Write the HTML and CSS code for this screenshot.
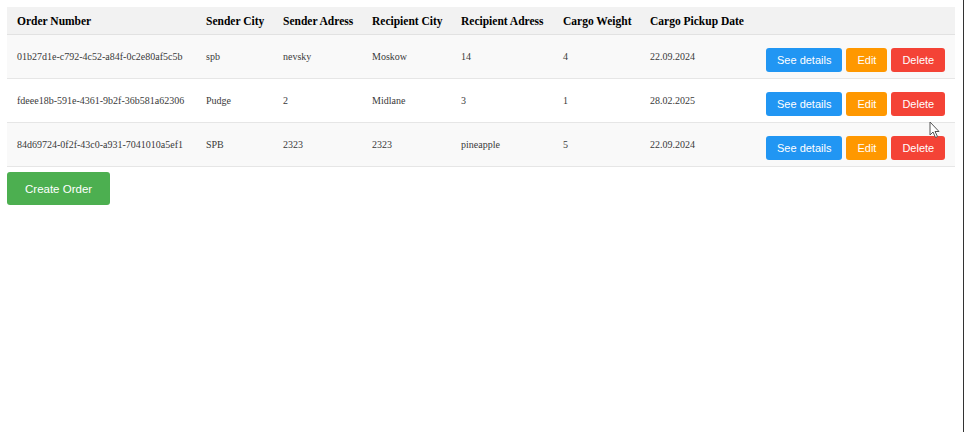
FILE: index.html
```html
<!DOCTYPE html>
<html lang="en">
<head>
<meta charset="utf-8">
<title>Orders</title>
<link rel="stylesheet" href="styles.css">
</head>
<body>
<div class="page">
  <table class="orders">
    <colgroup>
      <col class="c-id"><col class="c-scity"><col class="c-saddr"><col class="c-rcity"><col class="c-raddr"><col class="c-weight"><col class="c-date"><col class="c-actions">
    </colgroup>
    <thead>
      <tr>
        <th>Order Number</th>
        <th>Sender City</th>
        <th>Sender Adress</th>
        <th>Recipient City</th>
        <th>Recipient Adress</th>
        <th>Cargo Weight</th>
        <th>Cargo Pickup Date</th>
        <th></th>
      </tr>
    </thead>
    <tbody>
      <tr>
        <td>01b27d1e-c792-4c52-a84f-0c2e80af5c5b</td>
        <td>spb</td>
        <td>nevsky</td>
        <td>Moskow</td>
        <td>14</td>
        <td>4</td>
        <td>22.09.2024</td>
        <td class="actions"><button class="btn btn-blue">See details</button><button class="btn btn-orange">Edit</button><button class="btn btn-red">Delete</button></td>
      </tr>
      <tr>
        <td>fdeee18b-591e-4361-9b2f-36b581a62306</td>
        <td>Pudge</td>
        <td>2</td>
        <td>Midlane</td>
        <td>3</td>
        <td>1</td>
        <td>28.02.2025</td>
        <td class="actions"><button class="btn btn-blue">See details</button><button class="btn btn-orange">Edit</button><button class="btn btn-red">Delete</button></td>
      </tr>
      <tr>
        <td>84d69724-0f2f-43c0-a931-7041010a5ef1</td>
        <td>SPB</td>
        <td>2323</td>
        <td>2323</td>
        <td>pineapple</td>
        <td>5</td>
        <td>22.09.2024</td>
        <td class="actions"><button class="btn btn-blue">See details</button><button class="btn btn-orange">Edit</button><button class="btn btn-red">Delete</button></td>
      </tr>
    </tbody>
  </table>
  <button class="btn btn-green create">Create Order</button>
  <svg class="cursor" width="12" height="18" viewBox="0 0 12 18"><path d="M1 1 L1 14 L4 11 L6.5 16.5 L8.5 15.5 L6 10.5 L10 10.5 Z" fill="#fff" stroke="#555" stroke-width="1"/></svg>
</div>
</body>
</html>
```

FILE: styles.css
```css
html, body {
  margin: 0;
  padding: 0;
  background: #fff;
}
.page {
  position: relative;
  box-sizing: border-box;
  width: 964px;
  height: 432px;
  padding: 7px;
  border-right: 1px solid #333;
  font-family: "Liberation Serif", "Times New Roman", serif;
}
.orders {
  width: 948px;
  border-collapse: collapse;
  table-layout: fixed;
}
.c-id { width: 189px; }
.c-scity { width: 77px; }
.c-saddr { width: 89px; }
.c-rcity { width: 89px; }
.c-raddr { width: 102px; }
.c-weight { width: 87px; }
.c-date { width: 116px; }
.c-actions { width: 199px; }
.orders th {
  background: #f2f2f2;
  color: #000;
  font-weight: bold;
  font-size: 11.5px;
  text-align: left;
  height: 27px;
  padding: 0 10px;
  border-bottom: 1px solid #e2e2e2;
  white-space: nowrap;
}
.orders td {
  font-size: 10px;
  color: #3a3a3a;
  height: 43px;
  padding: 0 10px;
  border-bottom: 1px solid #e6e6e6;
  white-space: nowrap;
  vertical-align: middle;
}
.orders tbody tr:nth-child(odd) td {
  background: #f9f9f9;
}
.orders td.actions {
  text-align: right;
  font-size: 0;
}
.btn {
  font-family: "Liberation Sans", Arial, sans-serif;
  font-size: 11px;
  color: #fff;
  border: none;
  border-radius: 3px;
  height: 24px;
  padding: 0 11px;
  vertical-align: middle;
  cursor: pointer;
}
.actions .btn {
  margin-top: 6px;
}
.actions .btn + .btn {
  margin-left: 4px;
}
.btn-blue { background: #2196f3; }
.btn-orange { background: #ff9800; }
.btn-red { background: #f44336; }
.btn-green { background: #4caf50; }
.create {
  display: block;
  margin: 5px 0 0 0;
  height: 33px;
  padding: 0 18px;
  font-size: 11.5px;
}
.cursor {
  position: absolute;
  left: 929px;
  top: 121px;
}
```
